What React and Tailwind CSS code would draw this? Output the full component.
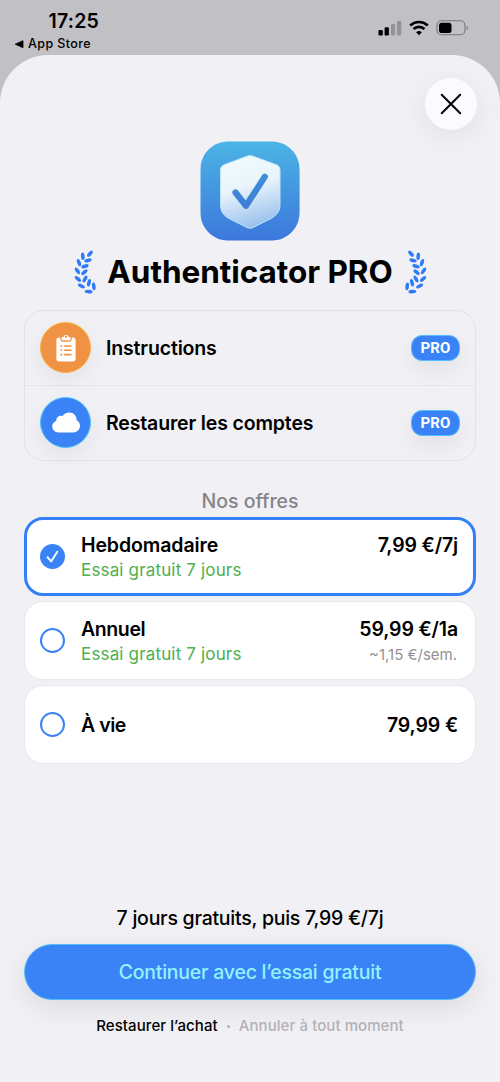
const leafShapes = [
  [25, 4.7, -48, 3.7],
  [17.8, 7.3, 84, 3.8],
  [22.9, 11.4, -14, 3.8],
  [14, 13.6, 70, 3.8],
  [20, 17.3, -18, 3.8],
  [12.4, 21.8, 55, 3.8],
  [19.4, 23.2, -42, 3.8],
  [12.9, 29.9, 42, 3.8],
  [20, 30, -62, 3.8],
  [16.4, 37, 28, 3.8],
  [24, 33.8, -76, 3.8],
  [28.8, 37.4, 84, 3.9],
  [23.6, 42.6, 4, 4],
];

function Laurel({ mirrored = false }) {
  return (
    <svg
      width="34"
      height="47"
      viewBox="0 0 34 47"
      className={mirrored ? "-scale-x-100 fill-[#2f7cf6]" : "fill-[#2f7cf6]"}
    >
      {leafShapes.map(([x, y, angle, rx]) => (
        <ellipse key={`${x}-${y}`} cx={x} cy={y} rx={rx} ry="1.8" transform={`rotate(${angle} ${x} ${y})`} />
      ))}
    </svg>
  );
}

function StatusBar() {
  return (
    <header className="flex h-[55px] shrink-0 justify-between">
      <div className="flex flex-col pt-[9px] pl-[14px]">
        <span className="pl-[34.5px] text-[19.5px] leading-[25px] font-semibold tracking-[0.2px]">17:25</span>
        <span className="flex items-center gap-[4px] text-[12.5px] leading-[20px] font-medium tracking-[0.4px]">
          <svg width="10" height="8" viewBox="0 0 10 8">
            <path d="M1.2 4.2 9 .7v7Z" stroke="#000" strokeWidth=".8" strokeLinejoin="round" />
          </svg>
          App Store
        </span>
      </div>
      <div className="box-content flex h-[16px] items-center gap-[7px] pt-[20px] pr-[31.5px]">
        <svg width="24" height="16" viewBox="0 0 24 16">
          <rect x="0.5" y="10" width="4.3" height="5.5" rx="1.2" />
          <rect x="6.6" y="7.3" width="4.3" height="8.2" rx="1.2" />
          <rect x="12.9" y="4" width="4.3" height="11.5" rx="1.2" fill="#949397" />
          <rect x="19" y="1" width="4.3" height="14.5" rx="1.2" fill="#949397" />
        </svg>
        <svg width="20" height="16" viewBox="0 0 20 16" fill="none" stroke="#000">
          <path d="M1.2 5.5C6.2.8 13.8.8 18.8 5.5" strokeWidth="2.7" />
          <path d="M4.5 9C7.6 6.1 12.4 6.1 15.5 9" strokeWidth="2.6" />
          <path d="M10 15.2 7.1 12.2q2.9-2.5 5.8 0Z" fill="#000" stroke="none" />
        </svg>
        <svg width="33" height="16" viewBox="0 0 33 16">
          <rect x="1" y=".8" width="28" height="14" rx="4.5" fill="none" stroke="#77767b" strokeWidth="1.1" />
          <rect x="3" y="2.7" width="12.5" height="10.4" rx="2.8" />
          <path d="M30.7 5.7c1.7.6 1.7 3.6 0 4.2Z" fill="#77767b" />
        </svg>
      </div>
    </header>
  );
}

function AppIcon() {
  return (
    <svg width="100" height="100" viewBox="0 0 100 100">
      <defs>
        <linearGradient id="tile" x1="0" y1="0" x2="0" y2="1">
          <stop offset="0" stopColor="#4bb4e5" />
          <stop offset="1" stopColor="#3c77dc" />
        </linearGradient>
        <linearGradient id="shield" x1="0.2" y1="0" x2="0.45" y2="1">
          <stop offset="0" stopColor="#f2fbfe" />
          <stop offset="0.45" stopColor="#e9f4fb" />
          <stop offset="1" stopColor="#9bc1ee" />
        </linearGradient>
        <linearGradient id="check" x1="0" y1="0" x2="0" y2="1">
          <stop offset="0" stopColor="#3b8fd8" />
          <stop offset="1" stopColor="#3f7fd6" />
        </linearGradient>
      </defs>
      <path
        d="M31 .5H69C75 .5 79 .9 83 2.800C89 5.500 94.400 10.500 97.200 17C99 21 99.600 25 99.600 31V69C99.600 75 99 79 97.200 83C94.400 89.500 89 94.400 83 97.200C79 99 75 99.600 69 99.600H31C25 99.600 21 99 17 97.200C11 94.400 5.600 89.500 2.800 83C.9 79 .5 75 .5 69V31C.5 25 .9 21 2.800 17C5.600 10.500 11 5.500 17 2.800C21 .9 25 .5 31 .5Z"
        fill="url(#tile)"
      />
      <path
        d="M47 15.200q3-1.300 6 0L77 24Q80 25.400 80 29V63.500C80 70 77 74 71 77.500L53 86.500q-3 1.500-6 0L29 77.500C23 74 20.500 70 20.500 63.500V29Q20.500 25.400 23.500 24Z"
        fill="url(#shield)"
        stroke="#bfe6f8"
        strokeWidth="1"
      />
      <path
        d="M35.500 51.500 46 64.800 64.800 35.800"
        fill="none"
        stroke="url(#check)"
        strokeWidth="6.2"
        strokeLinecap="round"
        strokeLinejoin="round"
      />
    </svg>
  );
}

function ClipboardIcon() {
  return (
    <svg width="20" height="28" viewBox="0 0 20 28">
      <path
        d="M3 3.600H4.100C4.100 6.800 5 7.700 7 7.700H13C15 7.700 15.900 6.800 15.900 3.600H17Q19.600 3.600 19.600 6.200V24.800Q19.600 27.500 17 27.500H3Q.4 27.500 .4 24.800V6.200Q.4 3.600 3 3.600Z"
        fill="#fff"
      />
      <path
        fillRule="evenodd"
        d="M5.400 5.100V4.200Q5.400 3 6.700 3H7.300A2.800 2.800 0 0 1 12.700 3H13.300Q14.600 3 14.600 4.200V5.100Q14.600 6.300 13.500 6.300H6.500Q5.400 6.300 5.400 5.100ZM8.900 2.800a1.100 1.100 0 1 0 2.200 0 1.100 1.100 0 1 0-2.200 0Z"
        fill="#fff"
      />
      <path d="M4.300 12h2m1.600 0h7.600M4.300 16.300h2m1.600 0h7.600M4.300 20.600h2m1.600 0h7.600" stroke="#f09243" strokeWidth="1.6" />
    </svg>
  );
}

function CloudIcon() {
  return (
    <svg width="28" height="21" viewBox="0 0 28 21">
      <path
        d="M6.300 20.400A6 6 0 0 1 .2 14.600C.2 11.700 1.900 9.700 4.300 9 4.100 5.300 7.200 3 10.500 4 12 1.700 14.300.5 17 .5 21.600.5 24.800 4 24.700 8.300 26.700 9.200 28 11.300 28 13.800 28 17.500 25.200 20.400 21.500 20.400Z"
        fill="#fff"
      />
    </svg>
  );
}

function Feature({ icon, label, circleClass }) {
  return (
    <li className="flex h-[74.5px] items-center px-[15px]">
      <span
        className={`flex size-[51px] items-center justify-center rounded-full border shadow-[0_8px_22px_rgba(0,0,0,0.06)] ${circleClass}`}
      >
        {icon}
      </span>
      <span className="ml-[15px] pt-[2px] text-[19.5px] font-semibold tracking-[-0.15px]">{label}</span>
      <span className="ml-auto flex h-[26px] w-[49px] items-center justify-center rounded-[11px] border border-[#55bdfb] bg-[#3983f6] font-['Roboto',sans-serif] text-[15px] font-bold tracking-[0.1px] text-white shadow-[0_8px_22px_rgba(0,0,0,0.07)]">
        PRO
      </span>
    </li>
  );
}

function Radio({ selected }) {
  if (!selected) return <span className="size-[25px] shrink-0 rounded-full border-2 border-[#3983f6]" />;
  return (
    <span className="flex size-[25px] shrink-0 items-center justify-center rounded-full bg-[#3983f6]">
      <svg width="25" height="25" viewBox="0 0 25 25" fill="none">
        <path
          d="m7.500 13.200 3.600 4.200 6.200-9.600"
          stroke="#fff"
          strokeWidth="1.9"
          strokeLinecap="round"
          strokeLinejoin="round"
        />
      </svg>
    </span>
  );
}

function Plan({ name, nameClass, trial, price, note, selected }) {
  return (
    <li
      className={
        selected
          ? "flex h-[79px] items-center rounded-[19px] border-3 border-[#3580f7] bg-white pr-[15px] pl-[13px]"
          : "flex h-[79px] items-center rounded-[19px] border border-[#e8e7eb] bg-white pr-[17px] pl-[15px]"
      }
    >
      <Radio selected={selected} />
      <div className="ml-[16px] flex flex-col pt-[2px]">
        <span className={`text-[19.5px] leading-[25px] font-semibold ${nameClass}`}>{name}</span>
        {trial && <span className="text-[17px] leading-[25px] tracking-[0.16px] text-[#4caf50]">{trial}</span>}
      </div>
      <div className="ml-auto flex flex-col items-end pt-[2px]">
        <span className="text-[19.5px] leading-[25px] font-semibold tracking-[-0.14px]">{price}</span>
        {trial && <span className="h-[25px] pr-px text-[15px] leading-[25px] text-[#929196]">{note}</span>}
      </div>
    </li>
  );
}

export default function App() {
  return (
    <div className="flex h-[1082px] w-[500px] flex-col overflow-hidden bg-[#c1c0c5] font-['Inter',sans-serif] text-black">
      <StatusBar />
      <main className="flex flex-1 flex-col rounded-t-[48px] bg-[#f1f0f5] px-[24px] pt-[23px]">
        <button
          aria-label="Fermer"
          className="-mr-px flex size-[52px] items-center justify-center self-end rounded-full bg-[#fbfaff] shadow-[0_6px_30px_rgba(0,0,0,0.07)]"
        >
          <svg width="22" height="22" viewBox="0 0 22 22" stroke="#000" strokeWidth="2" strokeLinecap="round">
            <path d="m1.700 1.700 18.500 18.500M20.200 1.700 1.700 20.200" />
          </svg>
        </button>

        <div className="mt-[11px] flex justify-center">
          <AppIcon />
        </div>

        <div className="mt-[8px] flex h-[47px] items-center justify-center gap-[8px]">
          <Laurel />
          <h1 className="w-[287px] pb-[2px] text-center text-[31.5px] font-bold tracking-[-0.05px] whitespace-nowrap">
            Authenticator PRO
          </h1>
          <Laurel mirrored />
        </div>

        <ul className="mt-[14px] divide-y divide-[#e7e6ea] rounded-[20px] border border-[#e3e2e6]">
          <Feature icon={<ClipboardIcon />} label="Instructions" circleClass="border-[#f9b13e] bg-[#f09243]" />
          <Feature icon={<CloudIcon />} label="Restaurer les comptes" circleClass="border-[#4fc0fb] bg-[#3983f6]" />
        </ul>

        <h2 className="mt-[25px] text-center text-[19.5px] leading-[30px] font-medium text-[#858489]">Nos offres</h2>

        <ul className="mt-px flex flex-col gap-[5px]">
          <Plan
            selected
            name="Hebdomadaire"
            nameClass="tracking-[-0.1px]"
            trial="Essai gratuit 7 jours"
            price="7,99 €/7j"
          />
          <Plan
            name="Annuel"
            nameClass="tracking-[-0.4px]"
            trial="Essai gratuit 7 jours"
            price="59,99 €/1a"
            note="~1,15 €/sem."
          />
          <Plan name="À vie" nameClass="tracking-[-0.45px]" price="79,99 €" />
        </ul>

        <footer className="mt-auto flex flex-col items-center pb-[45px]">
          <p className="text-[19.5px] leading-[26px] font-medium tracking-[-0.25px]">7 jours gratuits, puis 7,99 €/7j</p>
          <button className="mt-[13px] h-[56px] w-full rounded-full border border-[#55bdfb] bg-[#3983f6] pt-[2px] text-[19.5px] font-medium tracking-[-0.24px] text-[#91f3ff] shadow-[0_8px_28px_rgba(0,0,0,0.09)]">
            Continuer avec l’essai gratuit
          </button>
          <div className="mt-[15px] flex items-center text-[15px] leading-[22px] font-medium tracking-[0.08px]">
            <span>Restaurer l’achat</span>
            <span className="mx-[9px] size-[3px] rounded-full bg-[#b2b1b6]" />
            <span className="text-[#b2b1b6]">Annuler à tout moment</span>
          </div>
        </footer>
      </main>
    </div>
  );
}
